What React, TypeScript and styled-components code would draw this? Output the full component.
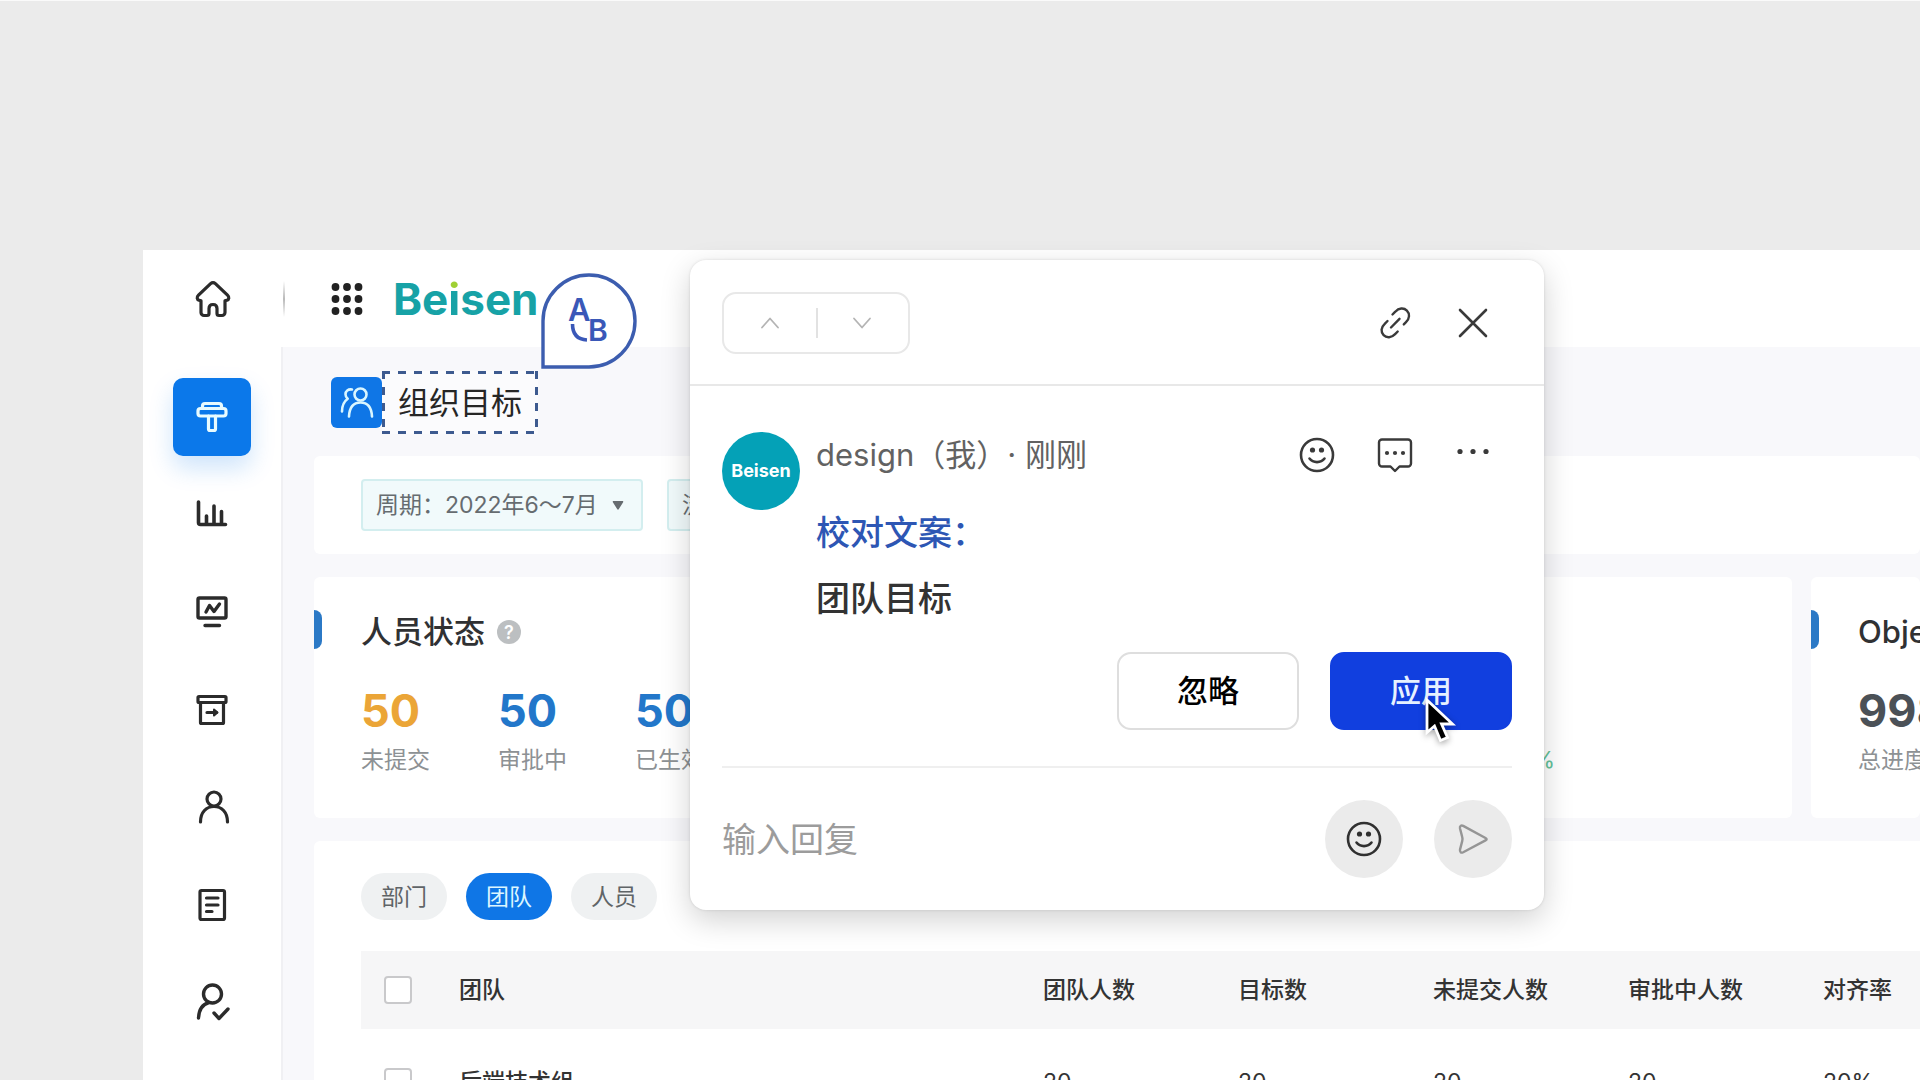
import React from "react";
import styled, { createGlobalStyle, css } from "styled-components";

const GlobalStyle = createGlobalStyle`
  *, *::before, *::after { box-sizing: border-box; }
  html, body { margin: 0; padding: 0; }
  body {
    background: #ebebeb;
    overflow: hidden;
    font-family: Inter, "Noto Sans CJK SC", sans-serif;
    color: #303133;
  }
  button, input, select { font-family: inherit; }
  button { cursor: pointer; }
  h1, h2, p, dl, dd, dt { margin: 0; font-weight: inherit; }
`;

const bareButton = css`
  display: inline-flex;
  align-items: center;
  justify-content: center;
  padding: 0;
  border: 0;
  background: none;
  color: inherit;
`;

/* ---------- canvas and frame ---------- */

const Canvas = styled.div`
  position: relative;
  display: flex;
  height: 100vh;
  padding: 249px 0 0 143px;
  border-top: 1px solid #fafafa;
  background: #ebebeb;
  overflow: hidden;
`;

const Frame = styled.div`
  flex: 1;
  min-width: 0;
  display: grid;
  grid-template-columns: 140px minmax(0, 1fr);
  grid-template-rows: minmax(0, 1fr);
  background: #fff;
`;

const Sidebar = styled.aside`
  display: flex;
  flex-direction: column;
  min-height: 0;
`;

const HomeLink = styled.a`
  flex: none;
  display: flex;
  align-items: center;
  justify-content: center;
  height: 97px;
  color: #2b2b2b;
`;

const SideNav = styled.nav`
  flex: 1;
  display: flex;
  flex-direction: column;
  align-items: center;
  justify-content: space-between;
  padding: 31px 0 39px;
  border-right: 2px solid #f0f0f3;
`;

const SideLink = styled.a<{ $active?: boolean }>`
  display: flex;
  align-items: center;
  justify-content: center;
  width: 78px;
  height: 78px;
  border-radius: 10px;
  color: ${(p) => (p.$active ? "#e8fbff" : "#2b2b2b")};
  background: ${(p) => (p.$active ? "#0b78ea" : "transparent")};
  box-shadow: ${(p) => (p.$active ? "0 12px 24px rgba(11, 120, 234, 0.2)" : "none")};
`;

const Main = styled.div`
  display: flex;
  flex-direction: column;
  min-width: 0;
  min-height: 0;
`;

const TopBar = styled.header`
  flex: none;
  display: flex;
  align-items: center;
  height: 97px;
`;

const Separator = styled.span`
  width: 2px;
  height: 36px;
  background: linear-gradient(#fff, #b9b9b9, #fff);
`;

const AppsButton = styled.button`
  ${bareButton}
  margin: 0 30px 0 46px;
  color: #222;
`;

const Logo = styled.a`
  font-weight: 700;
  font-size: 44px;
  line-height: 52px;
  color: #17a2a6;
  text-decoration: none;
`;

const LogoI = styled.span`
  background: linear-gradient(#9fd033 0 18px, #17a2a6 18px);
  background-clip: text;
  -webkit-background-clip: text;
  color: transparent;
`;

const Body = styled.main`
  flex: 1;
  display: flex;
  flex-direction: column;
  min-height: 0;
  padding: 24px 0 0 31px;
  background: #f8f8fb;
`;

/* ---------- title ---------- */

const TitleRow = styled.div`
  flex: none;
  display: flex;
  align-items: center;
  padding-left: 17px;
  margin-bottom: 22px;
`;

const TitleIcon = styled.span`
  display: flex;
  align-items: center;
  justify-content: center;
  width: 51px;
  height: 51px;
  border-radius: 6px;
  background: #0f76e6;
  color: #d9f6ff;
`;

const dash = "#3d5a8f 0 8px, transparent 8px 16px";

const MarkedTitle = styled.div`
  position: relative;
  padding: 8px 16px;
  background:
    repeating-linear-gradient(90deg, ${dash}) top / 100% 3px no-repeat,
    repeating-linear-gradient(90deg, ${dash}) bottom / 100% 3px no-repeat,
    repeating-linear-gradient(180deg, ${dash}) left / 3px 100% no-repeat,
    repeating-linear-gradient(180deg, ${dash}) right / 3px 100% no-repeat,
    #fbfbfd;
`;

const PageTitle = styled.h1`
  font-size: 31px;
  line-height: 47px;
  color: #262626;
`;

const TranslatePin = styled.button`
  ${bareButton}
  position: absolute;
  left: 100%;
  bottom: 65px;
  margin-left: 3px;
`;

/* ---------- cards ---------- */

const Card = styled.section`
  flex: none;
  border-radius: 6px;
  background: #fff;
  overflow: hidden;
`;

const FilterCard = styled(Card)`
  display: flex;
  gap: 24px;
  margin-bottom: 23px;
  padding: 23px 47px;
`;

const Filter = styled.label<{ $width: number }>`
  display: flex;
  align-items: center;
  width: ${(p) => p.$width}px;
  height: 52px;
  padding: 0 17px 0 13px;
  border: 2px solid #d3eeef;
  border-radius: 4px;
  background: #f1fafb;
  color: #666c70;
`;

const FilterSelect = styled.select`
  flex: 1;
  min-width: 0;
  padding: 0;
  border: 0;
  appearance: none;
  background: none;
  color: inherit;
  font-size: 23px;
  line-height: 32px;
`;

const StatCards = styled.div`
  flex: none;
  display: grid;
  grid-template-columns: minmax(0, 1fr) 109px;
  gap: 19px;
  margin-bottom: 23px;
`;

const StatCard = styled(Card)`
  padding: 33px 0 42px;
`;

const CardHead = styled.div`
  display: flex;
  align-items: flex-start;
  gap: 39px;
  height: 44px;
  margin-bottom: 33px;
`;

const Marker = styled.span`
  flex: none;
  width: 8px;
  height: 39px;
  border-radius: 0 8px 8px 0;
  background: #2b79c6;
`;

const CardTitle = styled.h2`
  display: flex;
  align-items: center;
  gap: 12px;
  font-size: 31px;
  font-weight: 500;
  line-height: 44px;
  white-space: nowrap;
`;

const Help = styled.button`
  ${bareButton}
  width: 24px;
  height: 24px;
  border-radius: 50%;
  background: #bcbfc1;
  color: #fff;
  font-size: 18px;
  font-weight: 600;
`;

const Stats = styled.dl`
  display: flex;
  padding-left: 47px;
`;

const Stat = styled.div`
  display: flex;
  flex-direction: column-reverse;
  gap: 9px;
  width: 137px;
`;

const StatValue = styled.dd<{ $color: string }>`
  font-size: 45px;
  font-weight: 700;
  line-height: 48px;
  color: ${(p) => p.$color};
`;

const StatLabel = styled.dt`
  font-size: 23px;
  line-height: 32px;
  white-space: nowrap;
  color: #8d9194;
`;

const Trend = styled.div`
  align-self: flex-end;
  margin: 0 237px 0 auto;
  font-size: 23px;
  line-height: 32px;
  color: #63c29a;
`;

const TableCard = styled(Card)`
  flex: 1;
  min-height: 0;
  padding: 32px 0 0 47px;
  border-radius: 6px 0 0 0;
`;

const Tabs = styled.div`
  display: flex;
  gap: 19px;
  margin-bottom: 31px;
`;

const Tab = styled.button<{ $active?: boolean }>`
  ${bareButton}
  width: 86px;
  height: 47px;
  border-radius: 24px;
  font-size: 23px;
  line-height: 32px;
  background: ${(p) => (p.$active ? "#0f76e6" : "#eff1f2")};
  color: ${(p) => (p.$active ? "#dcf6ff" : "#5f6467")};
`;

const Table = styled.table`
  width: 100%;
  table-layout: fixed;
  border-collapse: collapse;
  font-size: 23px;
  line-height: 32px;
  text-align: left;
  white-space: nowrap;

  th, td { padding: 0; color: #333; }
  th { height: 78px; background: #f6f6f7; font-weight: 500; }
  td { height: 106px; }
  td:nth-child(2) { font-weight: 500; }
`;

const Col = styled.col<{ $width?: number }>`
  width: ${(p) => (p.$width ? `${p.$width}px` : "auto")};
`;

const Tick = styled.input`
  display: block;
  appearance: none;
  width: 28px;
  height: 28px;
  margin: 0 0 0 23px;
  border: 2px solid #c9c9cb;
  border-radius: 4px;
  background: #fff;
`;

/* ---------- comment popup ---------- */

const Popup = styled.section`
  position: absolute;
  left: 690px;
  top: 259px;
  width: 854px;
  border-radius: 16px;
  background: #fff;
  box-shadow: 0 0 3px rgba(0, 0, 0, 0.12), 0 10px 30px rgba(0, 0, 0, 0.18);
`;

const PopupHead = styled.header`
  display: flex;
  align-items: center;
  height: 126px;
  padding: 2px 32px 0;
  border-bottom: 2px solid #e8e8e8;
`;

const Pager = styled.div`
  display: flex;
  align-items: center;
  height: 62px;
  margin-right: auto;
  border: 2px solid #e8e8e8;
  border-radius: 14px;
  color: #b4b4b4;
`;

const PagerButton = styled.button`
  ${bareButton}
  width: 92px;
  height: 58px;

  & + & { position: relative; }
  & + &::before {
    content: "";
    position: absolute;
    left: 0;
    top: 14px;
    width: 2px;
    height: 30px;
    background: #e2e2e2;
  }
`;

const IconButton = styled.button`
  ${bareButton}
  width: 78px;
  height: 46px;
  color: #3a3a3a;
`;

const Comment = styled.article`
  display: grid;
  grid-template-columns: 78px minmax(0, 1fr);
  column-gap: 16px;
  margin: 0 32px;
  padding: 46px 0 36px;
  border-bottom: 2px solid #efefef;
`;

const Avatar = styled.div`
  display: flex;
  align-items: center;
  justify-content: center;
  width: 78px;
  height: 78px;
  border-radius: 50%;
  background: #04a1b7;
  color: #fff;
  font-size: 18px;
  font-weight: 700;
  line-height: 24px;
`;

const CommentHead = styled.div`
  display: flex;
  align-items: center;
  height: 46px;
  margin-bottom: 22px;
`;

const Author = styled.p`
  margin-right: auto;
  font-size: 31px;
  line-height: 46px;
  color: #626262;
  text-spacing-trim: space-all;
`;

const CommentLine = styled.p<{ $accent?: boolean }>`
  font-size: 34px;
  font-weight: 500;
  line-height: 66px;
  color: ${(p) => (p.$accent ? "#2d56b4" : "#333")};
`;

const Actions = styled.div`
  display: flex;
  justify-content: flex-end;
  gap: 31px;
  margin-top: 20px;
`;

const ActionButton = styled.button<{ $primary?: boolean }>`
  ${bareButton}
  width: 182px;
  height: 78px;
  border: 2px solid ${(p) => (p.$primary ? "#113fdf" : "#dedede")};
  border-radius: 14px;
  background: ${(p) => (p.$primary ? "#113fdf" : "#fff")};
  color: ${(p) => (p.$primary ? "#e6f1ff" : "#000")};
  font-size: 31px;
  font-weight: 500;
  line-height: 44px;
`;

const ReplyRow = styled.form`
  display: flex;
  align-items: center;
  gap: 31px;
  padding: 32px;
`;

const ReplyInput = styled.input`
  flex: 1;
  min-width: 0;
  height: 66px;
  padding: 0;
  border: 0;
  outline: 0;
  background: none;
  font-size: 34px;
  color: #333;
  &::placeholder { color: #9c9c9c; opacity: 1; }
`;

const RoundButton = styled.button<{ $muted?: boolean }>`
  ${bareButton}
  width: 78px;
  height: 78px;
  border-radius: 50%;
  background: #ebebeb;
  color: ${(p) => (p.$muted ? "#959595" : "#303030")};
`;

const Pointer = styled.svg`
  position: absolute;
  left: 1422px;
  top: 693px;
  filter: drop-shadow(0 2px 3px rgba(0, 0, 0, 0.35));
`;

/* ---------- icons ---------- */

type IconProps = { w?: number; h?: number; sw?: number; children: React.ReactNode };

const Icon = ({ w = 36, h = 36, sw = 3, children }: IconProps) => (
  <svg
    width={w}
    height={h}
    viewBox={`0 0 ${w} ${h}`}
    fill="none"
    stroke="currentColor"
    strokeWidth={sw}
    strokeLinecap="round"
    strokeLinejoin="round"
    aria-hidden="true"
  >
    {children}
  </svg>
);

const HomeIcon = () => (
  <Icon h={38} sw={3.2}>
    <path d="M18 2.6c1 0 1.700.4 2.400 1L32.500 15.200c2 2 1.600 4.300-.6 5l-1.900.6V32.500a3 3 0 0 1-3 3h-3a2 2 0 0 1-2-2V28.500c0-2.400-1.500-4-4-4s-4 1.600-4 4v5a2 2 0 0 1-2 2H9a3 3 0 0 1-3-3V20.800l-1.900-.6c-2.200-.7-2.600-3-.6-5L15.600 3.600c.7-.6 1.400-1 2.400-1z" />
  </Icon>
);

const BrushIcon = () => (
  <Icon sw={3.2}>
    <path d="M8.500 9.500V7a2.500 2.500 0 0 1 2.500-2.500h14A2.500 2.500 0 0 1 27.500 7v2.500" />
    <rect x="4" y="9.500" width="28" height="7.500" rx="2.500" />
    <path d="M14.500 17v13a1.500 1.500 0 0 0 1.500 1.500h4a1.500 1.500 0 0 0 1.500-1.500V17" />
  </Icon>
);

const ChartIcon = () => (
  <Icon sw={3.6}>
    <path d="M4.500 5v20.500a2 2 0 0 0 2 2H31.500M12.500 19v8M20 9v18M27.500 14.500v12.500" />
  </Icon>
);

const MonitorIcon = () => (
  <Icon sw={3.4}>
    <rect x="4" y="4" width="28" height="20" rx="1.500" />
    <path d="M12 18l3.500-6.500 4.500 6L25.500 10M11 31.500h14.500" />
  </Icon>
);

const ArchiveIcon = () => (
  <Icon sw={3.2}>
    <rect x="4" y="4.500" width="28" height="6" rx="1" />
    <path d="M6.500 11v19.500a1 1 0 0 0 1 1h21a1 1 0 0 0 1-1V11M13 20.500h9.500" />
    <path d="M20 17.500l3.500 3-3.500 3z" fill="currentColor" strokeWidth="2" />
  </Icon>
);

const PersonIcon = () => (
  <Icon sw={3.2}>
    <circle cx="20" cy="10" r="7" />
    <path d="M6.500 33c0-10 6-15.500 13.500-15.500S33.500 23 33.500 33" />
  </Icon>
);

const DocIcon = () => (
  <Icon sw={3.2}>
    <rect x="6" y="3.500" width="24.500" height="29" rx="1.500" />
    <path d="M12.500 11h11.500M12.500 18h11.500M12.500 24.500h5.500" />
  </Icon>
);

const PersonCheckIcon = () => (
  <Icon h={40} sw={3.4}>
    <circle cx="18.500" cy="12" r="9" />
    <path d="M4.500 36C5 26 9.500 22 15 20.500M20 31l5 5.500 9-9.500" />
  </Icon>
);

const AppsIcon = () => (
  <svg width="32" height="34" viewBox="0 0 32 34" fill="currentColor" aria-hidden="true">
    {[5, 17, 29].map((y) => [4.5, 16, 27.5].map((x) => <circle key={`${x}-${y}`} cx={x} cy={y} r="3.900" />))}
  </svg>
);

const GroupIcon = () => (
  <Icon sw={2.6}>
    <circle cx="21.500" cy="9.500" r="6" />
    <path d="M10 31.500c.5-9.500 5-14 11.500-14s11 4.500 11.500 14M13 4.500c-4-.5-6.500 1.500-6.500 4.800 0 2 .8 3.400 2.200 4.500C5 16.500 3 20 3 26.500" />
  </Icon>
);

const PinShape = () => (
  <svg width="96" height="96" viewBox="0 0 96 96" aria-hidden="true">
    <path d="M2 94V48A46 46 0 1 1 48 94z" fill="#fff" stroke="#3c5daf" strokeWidth="3.400" />
    <g fill="#3a58b8" fontFamily="Inter, sans-serif" fontWeight="600">
      <text x="27" y="48" fontSize="31">A</text>
      <text x="47" y="68" fontSize="30">B</text>
    </g>
    <path d="M31.500 51c0 10.500 5 15.500 14.500 16" fill="none" stroke="#3a58b8" strokeWidth="3.600" />
  </svg>
);

const Caret = () => (
  <svg width="12" height="9" viewBox="0 0 12 10" fill="currentColor" aria-hidden="true">
    <path d="M1 0h10c.8 0 1.200.8.700 1.500L6.800 9.300c-.4.600-1.200.600-1.600 0L.3 1.500C-.2.800.2 0 1 0z" />
  </svg>
);

const ChevronUp = () => (
  <Icon w={20} h={12} sw={1.8}>
    <path d="M2 10.500L10 1.500l8 9" />
  </Icon>
);

const ChevronDown = () => (
  <Icon w={20} h={12} sw={1.8}>
    <path d="M2 1.500l8 9 8-9" />
  </Icon>
);

const LinkIcon = () => (
  <Icon sw={2.4}>
    <path d="M15.500 9.500l2.800-2.800c3.500-3.800 8.500-4.200 11.600-1.100s2.800 8-.9 11.600l-2.200 2.200M10.500 16l-2.800 2.800c-3.800 3.600-4.100 8.200-1.100 11.300s7.900 2.800 11.500-.9l2.600-2.700M14 22.500l8.500-8.700" />
  </Icon>
);

const CloseIcon = () => (
  <Icon w={30} h={30} sw={2.6}>
    <path d="M2 2l26 26M28 2L2 28" />
  </Icon>
);

const SmileIcon = () => (
  <Icon sw={2.6}>
    <circle cx="18" cy="18" r="16" />
    <circle cx="13.500" cy="13" r="2.600" fill="currentColor" stroke="none" />
    <circle cx="22.500" cy="13" r="2.600" fill="currentColor" stroke="none" />
    <path d="M10.500 21.500c3.500 4.800 11.500 4.800 15 0" />
  </Icon>
);

const ChatIcon = () => (
  <Icon sw={2.4}>
    <path d="M5 2.500h26a3 3 0 0 1 3 3v21a3 3 0 0 1-3 3h-8.500L18 34l-4.500-4.500H5a3 3 0 0 1-3-3v-21a3 3 0 0 1 3-3z" />
    {[10, 18, 26].map((x) => (
      <circle key={x} cx={x} cy="16" r="2.100" fill="currentColor" stroke="none" />
    ))}
  </Icon>
);

const MoreIcon = () => (
  <Icon>
    {[5, 18, 31].map((x) => (
      <circle key={x} cx={x} cy="14.500" r="2.600" fill="currentColor" stroke="none" />
    ))}
  </Icon>
);

const SendIcon = () => (
  <Icon w={32} h={32} sw={2.4}>
    <path d="M3 5.500c-.5-2.500 1.200-3.600 3.200-2.600L28.500 15c1.500.8 1.500 1.600 0 2.400L6.200 29.200c-2 1-3.700-.1-3.200-2.600l2.200-8.500c.4-1.400.4-2.800 0-4.200z" />
  </Icon>
);

/* ---------- data ---------- */

const NAV = [
  { name: "目标", icon: <BrushIcon />, active: true },
  { name: "统计", icon: <ChartIcon /> },
  { name: "看板", icon: <MonitorIcon /> },
  { name: "归档", icon: <ArchiveIcon /> },
  { name: "人员", icon: <PersonIcon /> },
  { name: "文档", icon: <DocIcon /> },
  { name: "审批", icon: <PersonCheckIcon /> },
];

const STATS = [
  { label: "未提交", value: 50, color: "#eba537" },
  { label: "审批中", value: 50, color: "#2277ca" },
  { label: "已生效", value: 50, color: "#2277ca" },
];

const TABS = ["部门", "团队", "人员"];
const COLUMNS = ["团队", "团队人数", "目标数", "未提交人数", "审批中人数", "对齐率"];
const ROWS = [["后端技术组", "20", "20", "20", "20", "20%"]];

export default function App() {
  const [tab, setTab] = React.useState("团队");

  return (
    <Canvas>
      <GlobalStyle />
      <Frame>
        <Sidebar>
          <HomeLink href="#" aria-label="首页">
            <HomeIcon />
          </HomeLink>
          <SideNav>
            {NAV.map((item) => (
              <SideLink key={item.name} href="#" aria-label={item.name} $active={item.active}>
                {item.icon}
              </SideLink>
            ))}
          </SideNav>
        </Sidebar>

        <Main>
          <TopBar>
            <Separator />
            <AppsButton type="button" aria-label="应用列表">
              <AppsIcon />
            </AppsButton>
            <Logo href="#">
              Be<LogoI>i</LogoI>sen
            </Logo>
          </TopBar>

          <Body>
            <TitleRow>
              <TitleIcon>
                <GroupIcon />
              </TitleIcon>
              <MarkedTitle>
                <PageTitle>组织目标</PageTitle>
                <TranslatePin type="button" aria-label="校对">
                  <PinShape />
                </TranslatePin>
              </MarkedTitle>
            </TitleRow>

            <FilterCard>
              <Filter $width={282}>
                <FilterSelect aria-label="周期">
                  <option>周期：2022年6～7月</option>
                </FilterSelect>
                <Caret />
              </Filter>
              <Filter $width={200}>
                <FilterSelect aria-label="流程">
                  <option>流程</option>
                </FilterSelect>
                <Caret />
              </Filter>
            </FilterCard>

            <StatCards>
              <StatCard>
                <CardHead>
                  <Marker />
                  <CardTitle>
                    人员状态
                    <Help type="button">?</Help>
                  </CardTitle>
                </CardHead>
                <Stats>
                  {STATS.map((s) => (
                    <Stat key={s.label}>
                      <StatLabel>{s.label}</StatLabel>
                      <StatValue $color={s.color}>{s.value}</StatValue>
                    </Stat>
                  ))}
                  <Trend>50%</Trend>
                </Stats>
              </StatCard>
              <StatCard>
                <CardHead>
                  <Marker />
                  <CardTitle>Objective</CardTitle>
                </CardHead>
                <Stats>
                  <Stat>
                    <StatLabel>总进度</StatLabel>
                    <StatValue $color="#4b5157">998</StatValue>
                  </Stat>
                </Stats>
              </StatCard>
            </StatCards>

            <TableCard>
              <Tabs>
                {TABS.map((name) => (
                  <Tab key={name} type="button" $active={name === tab} onClick={() => setTab(name)}>
                    {name}
                  </Tab>
                ))}
              </Tabs>
              <Table>
                <colgroup>
                  <Col $width={98} />
                  <Col />
                  <Col $width={195} />
                  <Col $width={195} />
                  <Col $width={195} />
                  <Col $width={195} />
                  <Col $width={97} />
                </colgroup>
                <thead>
                  <tr>
                    <th>
                      <Tick type="checkbox" aria-label="全选" />
                    </th>
                    {COLUMNS.map((name) => (
                      <th key={name}>{name}</th>
                    ))}
                  </tr>
                </thead>
                <tbody>
                  {ROWS.map((row) => (
                    <tr key={row[0]}>
                      <td>
                        <Tick type="checkbox" aria-label={row[0]} />
                      </td>
                      {row.map((cell, i) => (
                        <td key={i}>{cell}</td>
                      ))}
                    </tr>
                  ))}
                </tbody>
              </Table>
            </TableCard>
          </Body>
        </Main>
      </Frame>

      <Popup>
        <PopupHead>
          <Pager>
            <PagerButton type="button" aria-label="上一条">
              <ChevronUp />
            </PagerButton>
            <PagerButton type="button" aria-label="下一条">
              <ChevronDown />
            </PagerButton>
          </Pager>
          <IconButton type="button" aria-label="复制链接">
            <LinkIcon />
          </IconButton>
          <IconButton type="button" aria-label="关闭">
            <CloseIcon />
          </IconButton>
        </PopupHead>

        <Comment>
          <Avatar>Beisen</Avatar>
          <div>
            <CommentHead>
              <Author>design（我）· 刚刚</Author>
              <IconButton type="button" aria-label="表情">
                <SmileIcon />
              </IconButton>
              <IconButton type="button" aria-label="评论">
                <ChatIcon />
              </IconButton>
              <IconButton type="button" aria-label="更多">
                <MoreIcon />
              </IconButton>
            </CommentHead>
            <CommentLine $accent>校对文案：</CommentLine>
            <CommentLine>团队目标</CommentLine>
            <Actions>
              <ActionButton type="button">忽略</ActionButton>
              <ActionButton type="button" $primary>
                应用
              </ActionButton>
            </Actions>
          </div>
        </Comment>

        <ReplyRow onSubmit={(e) => e.preventDefault()}>
          <ReplyInput type="text" aria-label="输入回复" placeholder="输入回复" />
          <RoundButton type="button" aria-label="插入表情">
            <SmileIcon />
          </RoundButton>
          <RoundButton type="submit" aria-label="发送" $muted>
            <SendIcon />
          </RoundButton>
        </ReplyRow>
      </Popup>

      <Pointer width="36" height="54" viewBox="0 0 36 54" aria-hidden="true">
        <path
          d="M5 6v32.500l7.500-6.500 6 14.500 7-3-6-13.500h11z"
          fill="#000"
          stroke="#fff"
          strokeWidth="2.800"
        />
      </Pointer>
    </Canvas>
  );
}
